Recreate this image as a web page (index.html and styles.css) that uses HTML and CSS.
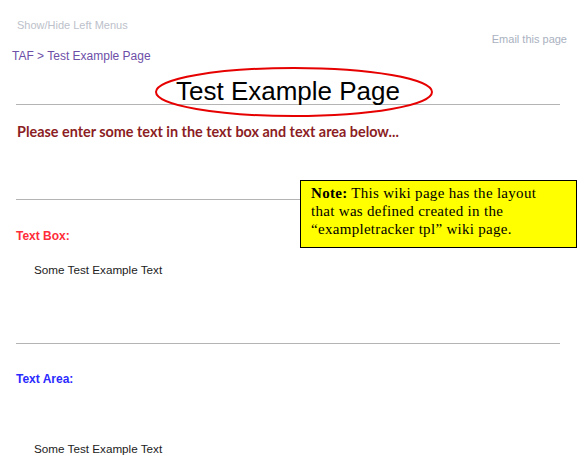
FILE: index.html
```html
<html lang="en">
<head>
  <title>Test Example Page</title>
  <link rel="stylesheet" href="styles.css">
</head>
<body>
<div class="menus"><a href="#">Show/Hide Left Menus</a></div>

<div class="crumbs">
  <div class="path">TAF &gt; Test Example Page</div>
  <div class="email"><a href="#">Email this page</a></div>
</div>

<div class="content">
  <div class="title">
    Test Example Page
    <!-- red ring drawn round the heading -->
    <svg class="ring" width="290" height="54" viewBox="0 0 290 54">
      <ellipse cx="145" cy="27" rx="138" ry="24" fill="none" stroke="#e60000" stroke-width="2"/>
    </svg>
  </div>
  <div class="rule"></div>

  <p class="intro">Please enter some text in the text box and text area below...</p>
  <div class="rule rule2"></div>

  <div class="note">
    <b>Note:</b> This wiki page has the layout<br>
    that was defined created in the<br>
    &ldquo;exampletracker tpl&rdquo; wiki page.
  </div>

  <div class="label label-box">Text Box:</div>
  <div class="value value-box">Some Test Example Text</div>
  <div class="rule rule3"></div>

  <div class="label label-area">Text Area:</div>
  <div class="value value-area">Some Test Example Text</div>
</div>
</body>
</html>
```

FILE: styles.css
```css
body { margin: 0; font-family: "Liberation Sans", Arial, sans-serif; font-size: 12px; color: #222; }
a { text-decoration: none; }

.menus { margin: 19px 0 0 17px; font-size: 11px; line-height: 13px; }
.menus a { color: #bcc1ca; }

.crumbs {
  display: flex;
  justify-content: space-between;
  align-items: flex-start;
  margin-top: 1px;
  padding: 0 17px 0 12px;
}
.path { padding-top: 16px; font-size: 12px; line-height: 14px; color: #6d4fa8; }
.email { font-size: 11px; line-height: 13px; }
.email a { color: #a9b1c0; }

.content { position: relative; padding: 0 24px 0 16px; }

.title {
  position: relative;
  margin-top: 16px;
  text-align: center;
  font-size: 26px;
  line-height: 25px;
  color: #000;
}
.ring { position: absolute; left: 133px; top: -14px; }

.rule { height: 1px; background: #b4b4b4; }

.intro {
  margin: 19px 0 59px 1px;
  font-family: "Comic Sans MS", "Lato", sans-serif;
  font-weight: bold;
  font-size: 14.4px;
  line-height: 16px;
  color: #8b1d24;
}

/* yellow callout laid over the rule below the intro */
.note {
  position: absolute;
  left: 300px;
  top: 101px;
  width: 265px;
  height: 63px;
  padding: 3px 0 0 10px;
  border: 1px solid #000;
  background: #ffff00;
  font-family: "Liberation Serif", "Times New Roman", serif;
  font-size: 15px;
  letter-spacing: 0.3px;
  line-height: 18px;
  color: #000;
}

.label { font-weight: bold; font-size: 12px; line-height: 14px; }
.label-box { margin-top: 29px; color: #ff2d3a; }
.label-area { margin-top: 28px; color: #2b2bff; }

.value { margin-left: 18px; font-size: 11.7px; line-height: 14px; color: #222; }
.value-box { margin-top: 20px; }
.value-area { margin-top: 56px; }

.rule3 { margin-top: 66px; }
```
